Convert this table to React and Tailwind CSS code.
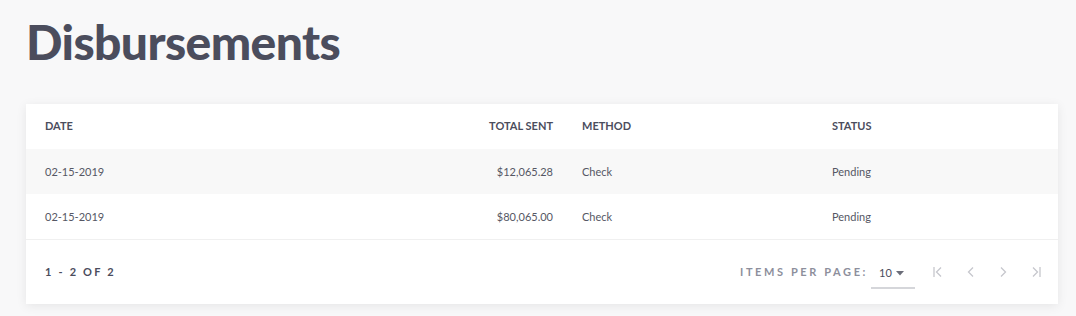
import React from "react";

const rows = [
  { date: "02-15-2019", total: "$12,065.28", method: "Check", status: "Pending" },
  { date: "02-15-2019", total: "$80,065.00", method: "Check", status: "Pending" },
];

function Chevron({ dir, bar }) {
  return (
    <svg width="14" height="14" viewBox="0 0 14 14" fill="none" stroke="#c6c7cd" strokeWidth="1.3">
      {dir === "left" ? <path d="M9 2.5 L4.5 7 L9 11.5" /> : <path d="M5 2.5 L9.5 7 L5 11.5" />}
      {bar === "left" && <path d="M2 2 V12" />}
      {bar === "right" && <path d="M12 2 V12" />}
    </svg>
  );
}

export default function App() {
  return (
    <div
      className="w-[1076px] h-[316px] bg-[#f8f8f9] overflow-hidden"
      style={{ fontFamily: "Lato, 'Open Sans', sans-serif" }}
    >
      <h1 className="pl-[26px] pt-[12px] h-[104px] text-[48px] leading-[60px] font-black text-[#4b4d5d] tracking-[-0.6px]">
        Disbursements
      </h1>
      <div className="ml-[26px] w-[1032px] bg-white shadow-[0_2px_10px_rgba(0,0,0,0.08)]">
        <div className="flex items-center h-[45px] pl-[19px] text-[11px] font-bold text-[#4b4d5d] uppercase">
          <div className="w-[260px]">Date</div>
          <div className="w-[248px] text-right">Total Sent</div>
          <div className="w-[250px] pl-[29px] box-content">Method</div>
          <div className="flex-1">Status</div>
        </div>
        {rows.map((r, i) => (
          <div
            key={i}
            className={`flex items-center pl-[19px] pt-[1px] text-[11px] text-[#555764] ${
              i === 0 ? "h-[45px] bg-[#f8f8f8]" : "h-[46px] bg-white border-b border-[#f0f0f0]"
            }`}
          >
            <div className="w-[260px]">{r.date}</div>
            <div className="w-[248px] text-right">{r.total}</div>
            <div className="w-[250px] pl-[29px] box-content">{r.method}</div>
            <div className="flex-1">{r.status}</div>
          </div>
        ))}
        <div className="flex items-center h-[64px] pl-[19px] pr-[16px]">
          <div className="text-[11px] font-bold tracking-[2.2px] text-[#4b4d5d]">1 - 2 OF 2</div>
          <div className="flex-1" />
          <div className="text-[11px] font-bold tracking-[2.6px] text-[#8d8f9c]">ITEMS PER PAGE:</div>
          <div className="ml-[3px] w-[44px] h-[30px] flex items-center pl-[8px] border-b-2 border-[#d5d6da] mt-[4px]">
            <span className="text-[11px] text-[#4b4d5d]">10</span>
            <svg width="8" height="5" viewBox="0 0 8 5" className="ml-[4px]">
              <path d="M0 0 H8 L4 4.5 Z" fill="#6b6d79" />
            </svg>
          </div>
          <div className="flex items-center ml-[17px] gap-[18px]">
            <Chevron dir="left" bar="left" />
            <Chevron dir="left" />
            <Chevron dir="right" />
            <Chevron dir="right" bar="right" />
          </div>
        </div>
      </div>
    </div>
  );
}
